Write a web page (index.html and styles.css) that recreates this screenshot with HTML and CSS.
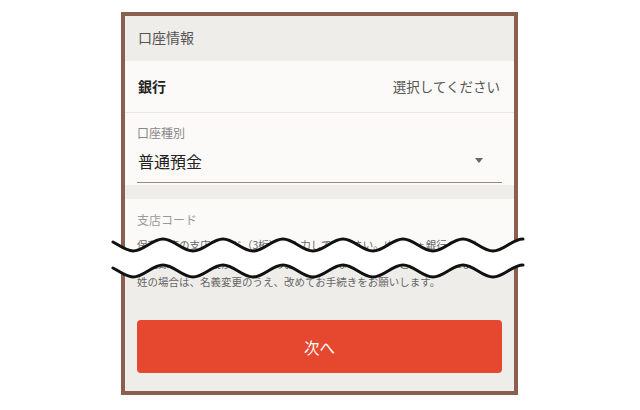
FILE: index.html
```html
<!DOCTYPE html>
<html lang="ja">
<head>
    <meta charset="UTF-8">
    <meta name="viewport" content="width=device-width, initial-scale=1.0">
    <title>口座情報</title>
    <link rel="stylesheet" href="styles.css">
</head>
<body>
    <div class="frame">
        <div class="section-head">口座情報</div>

        <div class="row-bank">
            <span class="row-label">銀行</span>
            <span class="row-value">選択してください</span>
        </div>

        <div class="field">
            <div class="field-label">口座種別</div>
            <div class="select">
                <span class="select-value">普通預金</span>
                <span class="select-arrow"></span>
            </div>
        </div>

        <div class="branch">
            <div class="field-label branch-label">支店コード</div>
            <p class="branch-hint">保有口座の支店コード（3桁）を入力してください。ゆうちょ銀行の方は</p>
        </div>

        <div class="note">
            <p>ご登録の口座名義がお客さまのお名前と異なる場合や、ご結婚などにより改姓の場合は、名義変更のうえ、改めてお手続きをお願いします。</p>
            <button class="btn-next" type="button">次へ</button>
        </div>
    </div>

    <!-- break mark over the omitted part -->
    <svg class="cut" width="640" height="410" viewBox="0 0 640 410">
        <path class="cut-fill" d="M113 242 C119 245 126 251 133 251 C144 251 152 239 163 239 C174 239 182 251 193 251 C204 251 212 239 223 239 C234 239 242 251 253 251 C264 251 272 239 283 239 C294 239 302 251 313 251 C324 251 332 239 343 239 C354 239 362 251 373 251 C384 251 392 239 403 239 C414 239 422 251 433 251 C444 251 452 239 463 239 C474 239 482 251 493 251 C504 251 512 239 523 239 L523 265 C512 265 504 277 493 277 C482 277 474 265 463 265 C452 265 444 277 433 277 C422 277 414 265 403 265 C392 265 384 277 373 277 C362 277 354 265 343 265 C332 265 324 277 313 277 C302 277 294 265 283 265 C272 265 264 277 253 277 C242 277 234 265 223 265 C212 265 204 277 193 277 C182 277 174 265 163 265 C152 265 144 277 133 277 C126 277 119 271 113 268 Z"/>
        <path class="cut-line" d="M113 242 C119 245 126 251 133 251 C144 251 152 239 163 239 C174 239 182 251 193 251 C204 251 212 239 223 239 C234 239 242 251 253 251 C264 251 272 239 283 239 C294 239 302 251 313 251 C324 251 332 239 343 239 C354 239 362 251 373 251 C384 251 392 239 403 239 C414 239 422 251 433 251 C444 251 452 239 463 239 C474 239 482 251 493 251 C504 251 512 239 523 239"/>
        <path class="cut-line" d="M113 268 C119 271 126 277 133 277 C144 277 152 265 163 265 C174 265 182 277 193 277 C204 277 212 265 223 265 C234 265 242 277 253 277 C264 277 272 265 283 265 C294 265 302 277 313 277 C324 277 332 265 343 265 C354 265 362 277 373 277 C384 277 392 265 403 265 C414 265 422 277 433 277 C444 277 452 265 463 265 C474 265 482 277 493 277 C504 277 512 265 523 265"/>
    </svg>
</body>
</html>
```

FILE: styles.css
```css
* {
    margin: 0;
    padding: 0;
    box-sizing: border-box;
}

body {
    font-family: "Noto Sans CJK JP", "Noto Sans", sans-serif;
    background: #fff;
    color: #333;
    position: relative;
    width: 640px;
    height: 410px;
    overflow: hidden;
}

/* Phone frame */
.frame {
    width: 397px;
    height: 383px;
    margin: 12px 0 0 121px;
    border: 4px solid #8b5f4d;
    background: #efedea;
    display: flex;
    flex-direction: column;
}

.section-head {
    height: 45px;
    padding: 0 13px 4px;
    display: flex;
    align-items: center;
    font-size: 14px;
    color: #555;
}

/* Bank row */
.row-bank {
    height: 52px;
    padding: 0 14px 1px 13px;
    display: flex;
    align-items: center;
    justify-content: space-between;
    background: #fcfaf8;
    border-bottom: 1px solid #ebe7e3;
}

.row-label {
    font-size: 14px;
    font-weight: bold;
    color: #222;
}

.row-value {
    font-size: 13.5px;
    color: #555;
}

/* Account type */
.field {
    background: #fcfaf8;
    padding: 12px 12px 2px;
}

.field-label {
    font-size: 12px;
    line-height: 16px;
    color: #888;
}

.select {
    margin-top: 4px;
    height: 38px;
    padding-bottom: 6px;
    display: flex;
    align-items: center;
    justify-content: space-between;
    border-bottom: 1px solid #8f8c89;
}

.select-value {
    font-size: 16px;
    color: #222;
    padding-left: 1px;
}

.select-arrow {
    width: 0;
    height: 0;
    margin-right: 19px;
    border-left: 4.5px solid transparent;
    border-right: 4.5px solid transparent;
    border-top: 5px solid #666;
}

/* Branch code */
.branch {
    margin-top: 14px;
    background: #fcfaf8;
    padding: 13px 12px 1px;
}

.branch-label {
    color: #999;
    font-size: 12px;
}

.branch-hint {
    margin-top: 8px;
    font-size: 10.5px;
    line-height: 18px;
    color: #666;
    white-space: nowrap;
    overflow: hidden;
}

/* Note + button */
.note {
    padding: 0 12px;
}

.note p {
    font-size: 10.5px;
    line-height: 18px;
    color: #666;
}

.btn-next {
    display: block;
    width: 100%;
    height: 53px;
    margin-top: 29px;
    border: none;
    border-radius: 4px;
    background: #e5472f;
    color: #fff;
    font-family: inherit;
    font-size: 15.5px;
}

/* Break mark */
.cut {
    position: absolute;
    top: 0;
    left: 0;
    pointer-events: none;
}

.cut-fill {
    fill: #fff;
}

.cut-line {
    fill: none;
    stroke: #111;
    stroke-width: 3;
    stroke-linecap: round;
}
```
